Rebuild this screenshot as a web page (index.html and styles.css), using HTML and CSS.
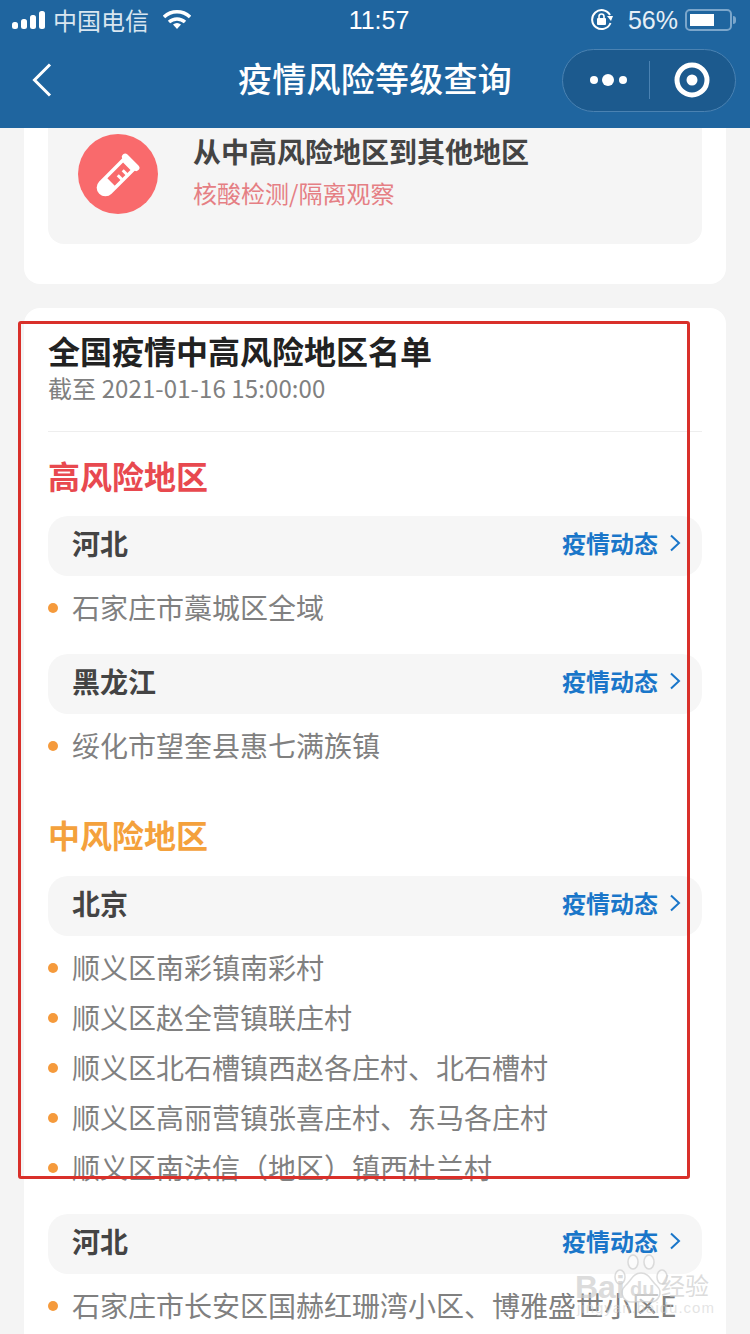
FILE: index.html
```html
<!DOCTYPE html>
<html lang="zh-CN">

<head>
    <meta charset="utf-8">
    <title>疫情风险等级查询</title>
    <link rel="stylesheet" href="styles.css">
</head>

<body>
    <header class="top-bar">
        <div class="status-bar">
            <div class="status-left">
                <svg class="signal" width="34" height="18" viewBox="0 0 34 18">
                    <rect x="0" y="11" width="6" height="7" rx="2.5" />
                    <rect x="9" y="8" width="6" height="10" rx="2.5" />
                    <rect x="18" y="4" width="6" height="14" rx="2.5" />
                    <rect x="27" y="0" width="6" height="18" rx="2.5" />
                </svg>
                <span class="carrier">中国电信</span>
                <svg class="wifi" width="28" height="20" viewBox="0 0 28 20">
                    <path d="M1 7 A19 19 0 0 1 27 7" />
                    <path d="M6 12 A12 12 0 0 1 22 12" />
                    <path d="M14 19 L10 14.5 A6 6 0 0 1 18 14.5 Z" class="wifi-tip" />
                </svg>
            </div>
            <div class="clock">11:57</div>
            <div class="status-right">
                <svg class="rotate-lock" width="24" height="22" viewBox="0 0 24 22">
                    <path d="M20 6 A9.5 9.5 0 1 0 20.5 14" />
                    <path d="M17 7 L23 7 L21 12 Z" class="lock-fill" />
                    <rect x="7" y="9" width="9" height="7" rx="1" class="lock-fill" />
                    <path d="M9 9 V7.5 A2.5 2.5 0 0 1 14 7.5 V9" class="lock-loop" />
                </svg>
                <span class="battery-pct">56%</span>
                <div class="battery">
                    <div class="battery-fill"></div>
                </div>
                <div class="battery-nub"></div>
            </div>
        </div>
        <div class="nav-bar">
            <svg class="back" width="20" height="34" viewBox="0 0 20 34">
                <path d="M18 1.5 L2.5 17 L18 32.5" />
            </svg>
            <h1 class="nav-title">疫情风险等级查询</h1>
            <div class="capsule">
                <svg class="capsule-more" width="40" height="14" viewBox="0 0 40 14">
                    <circle cx="5" cy="7" r="4" />
                    <circle cx="19" cy="7" r="6" />
                    <circle cx="34" cy="7" r="4" />
                </svg>
                <div class="capsule-line"></div>
                <svg class="capsule-target" width="36" height="36" viewBox="0 0 36 36">
                    <circle cx="18" cy="18" r="15" class="target-ring" />
                    <circle cx="18" cy="18" r="5.5" />
                </svg>
            </div>
        </div>
    </header>

    <main class="page">
        <section class="card card-first">
            <div class="rule-box">
                <div class="rule-icon">
                    <svg width="80" height="80" viewBox="0 0 80 80">
                        <g transform="translate(-2 3) rotate(45 40 40)">
                            <rect x="29" y="16" width="22" height="6.5" rx="3.25" fill="#fff" />
                            <path d="M33 23 H47 V55 A7 7 0 0 1 33 55 Z" fill="none" stroke="#fff" stroke-width="3.5" />
                            <path d="M33 47 H47 V55 A7 7 0 0 1 33 55 Z" fill="#fff" />
                            <rect x="40" y="29" width="6" height="3" fill="#fff" />
                            <rect x="40" y="36" width="6" height="3" fill="#fff" />
                        </g>
                    </svg>
                </div>
                <div class="rule-text">
                    <div class="rule-title">从中高风险地区到其他地区</div>
                    <div class="rule-sub">核酸检测/隔离观察</div>
                </div>
            </div>
        </section>

        <section class="card card-list">
            <div class="list-head">
                <h2 class="list-title">全国疫情中高风险地区名单</h2>
                <div class="list-date">截至 2021-01-16 15:00:00</div>
            </div>

            <h3 class="level level-high">高风险地区</h3>
            <div class="province">
                <span class="province-name">河北</span>
                <span class="province-link">疫情动态<svg class="chevron" width="12" height="18" viewBox="0 0 12 18"><path d="M2 1.5 L10 9 L2 16.5" /></svg></span>
            </div>
            <ul class="places">
                <li>石家庄市藁城区全域</li>
            </ul>
            <div class="province">
                <span class="province-name">黑龙江</span>
                <span class="province-link">疫情动态<svg class="chevron" width="12" height="18" viewBox="0 0 12 18"><path d="M2 1.5 L10 9 L2 16.5" /></svg></span>
            </div>
            <ul class="places">
                <li>绥化市望奎县惠七满族镇</li>
            </ul>

            <h3 class="level level-mid">中风险地区</h3>
            <div class="province">
                <span class="province-name">北京</span>
                <span class="province-link">疫情动态<svg class="chevron" width="12" height="18" viewBox="0 0 12 18"><path d="M2 1.5 L10 9 L2 16.5" /></svg></span>
            </div>
            <ul class="places">
                <li>顺义区南彩镇南彩村</li>
                <li>顺义区赵全营镇联庄村</li>
                <li>顺义区北石槽镇西赵各庄村、北石槽村</li>
                <li>顺义区高丽营镇张喜庄村、东马各庄村</li>
                <li>顺义区南法信（地区）镇西杜兰村</li>
            </ul>
            <div class="province">
                <span class="province-name">河北</span>
                <span class="province-link">疫情动态<svg class="chevron" width="12" height="18" viewBox="0 0 12 18"><path d="M2 1.5 L10 9 L2 16.5" /></svg></span>
            </div>
            <ul class="places">
                <li>石家庄市长安区国赫红珊湾小区、博雅盛世小区E区</li>
            </ul>
        </section>
    </main>

    <!-- annotation drawn over the screenshot -->
    <div class="red-frame"></div>

    <!-- watermark -->
    <div class="watermark">
        <svg class="paw" width="60" height="56" viewBox="0 0 60 56">
            <ellipse cx="9" cy="24" rx="5" ry="7" />
            <ellipse cx="22" cy="9" rx="5" ry="7" />
            <ellipse cx="38" cy="9" rx="5" ry="7" />
            <ellipse cx="51" cy="24" rx="5" ry="7" />
            <path d="M30 20 C38 20 40 28 46 33 C52 39 48 50 38 49 C34 48.500 26 48.500 22 49 C12 50 8 39 14 33 C20 28 22 20 30 20 Z" />
        </svg>
        <span class="wm-bai">Bai</span>
        <span class="wm-du">du</span>
        <span class="wm-cn">经验</span>
        <div class="wm-url">jingyan.baidu.com</div>
    </div>
</body>

</html>
```

FILE: styles.css
```css
* {
    box-sizing: border-box;
}

html,
body {
    margin: 0;
    padding: 0;
}

body {
    position: relative;
    width: 750px;
    height: 1334px;
    overflow: hidden;
    background-color: #f4f4f4;
    font-family: "Noto Sans CJK SC", "Liberation Sans", sans-serif;
}

/* top bar */
.top-bar {
    height: 128px;
    background-color: #1f659f;
    color: #fff;
}

.status-bar {
    display: grid;
    grid-template-columns: 1fr auto 1fr;
    align-items: center;
    height: 40px;
    padding: 0 12px;
}

.status-left {
    display: flex;
    align-items: center;
}

.signal {
    fill: #fff;
}

.carrier {
    margin-left: 7px;
    font-size: 24px;
    line-height: 40px;
    color: #d9e6f0;
}

.wifi {
    margin-left: 14px;
    fill: none;
    stroke: #fff;
    stroke-width: 3.5;
}

.wifi-tip {
    fill: #fff;
    stroke: none;
}

.clock {
    margin-left: 8px;
    font-family: "Liberation Sans", sans-serif;
    font-size: 25px;
    line-height: 40px;
}

.status-right {
    display: flex;
    align-items: center;
    justify-content: flex-end;
}

.rotate-lock {
    fill: none;
    stroke: #fff;
    stroke-width: 2;
}

.rotate-lock .lock-fill {
    fill: #fff;
    stroke: none;
}

.rotate-lock .lock-loop {
    stroke-width: 1.6;
}

.battery-pct {
    margin-left: 14px;
    font-family: "Liberation Sans", sans-serif;
    font-size: 25px;
    line-height: 40px;
    color: #e6eff6;
}

.battery {
    width: 47px;
    height: 22px;
    margin-left: 7px;
    padding: 3px;
    border: 2px solid #7ba6cb;
    border-radius: 5px;
}

.battery-fill {
    width: 24px;
    height: 100%;
    background-color: #fff;
}

.battery-nub {
    width: 3px;
    height: 8px;
    margin: 0 2px 0 1px;
    border-radius: 0 3px 3px 0;
    background-color: #7ba6cb;
}

.nav-bar {
    display: grid;
    grid-template-columns: 1fr auto 1fr;
    align-items: center;
    height: 80px;
    padding: 0 14px;
}

.back {
    margin-left: 18px;
    fill: none;
    stroke: #fff;
    stroke-width: 3;
}

.nav-title {
    margin: 0;
    font-size: 34px;
    font-weight: 500;
    line-height: 76px;
    padding-bottom: 4px;
    letter-spacing: 0.25px;
}

.capsule {
    display: flex;
    align-items: center;
    justify-self: end;
    width: 174px;
    height: 63px;
    padding-left: 26px;
    border: 1px solid #4a82b2;
    border-radius: 32px;
    background-color: #1c5a8e;
}

.capsule-more {
    fill: #fff;
}

.capsule-line {
    width: 1px;
    height: 38px;
    margin-left: 20px;
    background-color: #4a82b2;
}

.capsule-target {
    margin-left: 24px;
    fill: #fff;
}

.capsule-target .target-ring {
    fill: none;
    stroke: #fff;
    stroke-width: 5;
}

/* page */
.page {
    padding: 0 24px;
}

.card {
    background-color: #fff;
    border-radius: 16px;
}

.card-first {
    height: 156px;
    padding: 0 24px 40px;
    border-radius: 0 0 16px 16px;
}

.rule-box {
    display: flex;
    height: 116px;
    padding: 6px 0 0 30px;
    border-radius: 0 0 16px 16px;
    background-color: #f5f5f5;
}

.rule-icon {
    width: 80px;
    height: 80px;
    border-radius: 50%;
    background-color: #f96a6c;
}

.rule-text {
    margin: -3px 0 0 35px;
}

.rule-title {
    font-size: 28px;
    font-weight: 700;
    line-height: 40px;
    color: #444;
}

.rule-sub {
    margin-top: 6px;
    font-size: 24px;
    line-height: 32px;
    color: #e57f84;
}

.card-list {
    margin-top: 24px;
    padding: 20px 24px 0;
}

.list-head {
    padding-bottom: 27px;
    border-bottom: 1px solid #eee;
}

.list-title {
    margin: 0;
    font-size: 32px;
    font-weight: 700;
    line-height: 44px;
    color: #222;
}

.list-date {
    font-size: 24px;
    line-height: 32px;
    letter-spacing: 0.1px;
    color: #808080;
}

.level {
    margin: 41px 0 20px;
    font-size: 32px;
    font-weight: 700;
    line-height: 44px;
}

.level-high {
    margin-top: 21px;
    margin-bottom: 19px;
    color: #e8494f;
}

.level-mid {
    color: #f4a13c;
}

.province {
    display: flex;
    justify-content: space-between;
    align-items: center;
    height: 60px;
    padding: 0 21px 0 24px;
    border-radius: 20px;
    background-color: #f6f6f6;
}

.province-name {
    padding-bottom: 6px;
    font-size: 28px;
    font-weight: 700;
    color: #444;
}

.province-link {
    display: flex;
    align-items: center;
    padding-bottom: 7px;
    font-size: 24px;
    font-weight: 700;
    color: #1a76c9;
}

.chevron {
    margin-left: 11px;
    fill: none;
    stroke: #1a76c9;
    stroke-width: 2;
}

.places {
    margin: 7px 0 21px;
    padding: 0;
    list-style: none;
}

.places li {
    position: relative;
    padding: 4px 0 6px 24px;
    font-size: 28px;
    line-height: 40px;
    color: #808080;
}

.places li::before {
    content: "";
    position: absolute;
    left: 0;
    top: 20px;
    width: 10px;
    height: 10px;
    border-radius: 50%;
    background-color: #f59a3c;
}

/* annotation */
.red-frame {
    position: absolute;
    left: 18px;
    top: 321px;
    width: 672px;
    height: 858px;
    border: 3px solid #d9302a;
    border-radius: 3px;
}

/* watermark */
.watermark {
    position: absolute;
    left: 575px;
    top: 1253px;
    width: 135px;
    height: 64px;
    color: rgba(205, 205, 205, 0.7);
    font-family: "Liberation Sans", sans-serif;
    white-space: nowrap;
}

.paw {
    position: absolute;
    left: 36px;
    top: 0;
    fill: rgba(255, 255, 255, 0.55);
    stroke: rgba(205, 205, 205, 0.7);
    stroke-width: 1.5;
}

.wm-bai {
    position: absolute;
    left: 0;
    top: 16px;
    font-size: 32px;
    font-weight: 700;
    line-height: 36px;
}

.wm-du {
    position: absolute;
    left: 55px;
    top: 24px;
    font-size: 20px;
    font-weight: 700;
    line-height: 24px;
}

.wm-cn {
    position: absolute;
    left: 86px;
    top: 16px;
    font-family: "Noto Sans CJK SC", sans-serif;
    font-size: 24px;
    line-height: 32px;
}

.wm-url {
    position: absolute;
    left: 2px;
    top: 46px;
    font-size: 15px;
    line-height: 18px;
    letter-spacing: 1px;
    color: rgba(205, 205, 205, 0.55);
}
```
